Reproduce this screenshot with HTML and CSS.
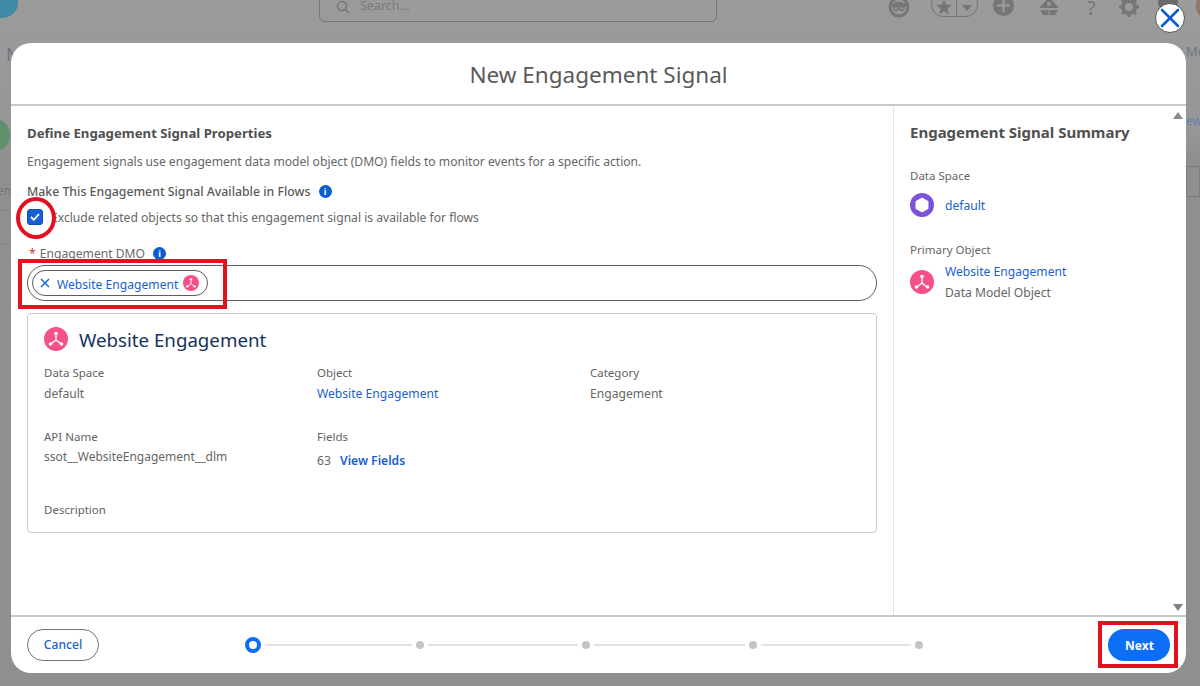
FILE: index.html
```html
<!DOCTYPE html>
<html>
<head>
<meta http-equiv="Content-Type" content="text/html; charset=utf-8">
<title>New Engagement Signal</title>
<link rel="stylesheet" href="styles.css">
</head>
<body>
    <!-- page behind the modal -->
    <div class="backdrop">
        <div class="cloud"></div>
        <div class="search">
            <svg width="14" height="14" viewBox="0 0 14 14"><circle cx="6" cy="6" r="4.5" fill="none" stroke="#767676" stroke-width="1.5"/><path d="M9.500 9.500L13 13" stroke="#767676" stroke-width="1.5"/></svg>
            <span>Search...</span>
        </div>
        <div class="top_icons">
            <svg class="ico_a" width="22" height="22" viewBox="0 0 22 22"><circle cx="11" cy="11" r="10.500" fill="#767676"/><circle cx="11" cy="11" r="7.500" fill="#999"/><path d="M4 8q7-5 14 0v3H4z" fill="#767676"/><circle cx="8" cy="12.500" r="2" fill="none" stroke="#767676" stroke-width="1.500"/><circle cx="14" cy="12.500" r="2" fill="none" stroke="#767676" stroke-width="1.500"/></svg>
            <div class="fav">
                <span class="fav_star">
                    <svg width="16" height="16" viewBox="0 0 16 16"><path d="M8 0.500l2.300 5 5.400 0.600-4 3.700 1.100 5.400L8 12.500l-4.800 2.700 1.100-5.400-4-3.700 5.400-0.600z" fill="#767676"/></svg>
                </span>
                <span class="fav_arrow"></span>
            </div>
            <svg class="ico_b" width="21" height="21" viewBox="0 0 21 21"><circle cx="10.500" cy="10.500" r="10.500" fill="#767676"/><path d="M10.500 4v13M4 10.500h13" stroke="#999" stroke-width="2.500"/></svg>
            <svg class="ico_c" width="20" height="20" viewBox="0 0 20 20"><path d="M10 0L20 11H0z" fill="#767676"/><path d="M1 13h18l-3 5H4z" fill="#767676"/><circle cx="10" cy="7" r="2" fill="#999"/><path d="M10 13v5" stroke="#999"/></svg>
            <span class="help">?</span>
            <svg class="ico_d" width="20" height="20" viewBox="0 0 20 20"><circle cx="10" cy="10" r="6" fill="none" stroke="#767676" stroke-width="4"/><path d="M10 0v4M10 16v4M0 10h4M16 10h4M3 3l3 3M14 14l3 3M17 3l-3 3M6 14l-3 3" stroke="#767676" stroke-width="3"/></svg>
            <div class="bg_dome"></div>
            <div class="bg_avatar"></div>
        </div>
        <span class="bg_m">M</span>
        <span class="bg_mo">Mo</span>
        <span class="bg_ew">ew</span>
        <div class="bg_green"></div>
        <span class="bg_em">em</span>
        <div class="bg_line bg_line1"></div>
        <div class="bg_line bg_line2"></div>
        <div class="bg_box"></div>
    </div>

    <a class="close" href="javascript:;">
        <svg width="20" height="20" viewBox="0 0 20 20"><path d="M2 2L18 18M18 2L2 18" stroke="#0b5cd5" stroke-width="2.600" stroke-linecap="round"/></svg>
    </a>

    <div class="modal">
        <h1 class="modal_head">New Engagement Signal</h1>
        <div class="modal_body">
            <div class="main">
                <h2 class="sec_title">Define Engagement Signal Properties</h2>
                <p class="intro">Engagement signals use engagement data model object (DMO) fields to monitor events for a specific action.</p>
                <div class="flow_label">Make This Engagement Signal Available in Flows <i class="info">i</i></div>
                <div class="check_row">
                    <span class="check">
                        <svg width="10" height="8" viewBox="0 0 10 8"><path d="M1 4l2.800 2.800L9 1.200" fill="none" stroke="#fff" stroke-width="1.800"/></svg>
                    </span>
                    <span class="check_text">Exclude related objects so that this engagement signal is available for flows</span>
                </div>
                <div class="dmo_label"><span class="req">*</span> Engagement DMO <i class="info">i</i></div>
                <div class="dmo_input">
                    <span class="pill">
                        <svg width="10" height="10" viewBox="0 0 10 10"><path d="M1 1l8 8M9 1l-8 8" stroke="#0b5cd5" stroke-width="1.300"/></svg>
                        <span class="pill_text">Website Engagement</span>
                        <svg class="dmo_ico" width="16" height="16" viewBox="0 0 24 24"><use href="#dmo"/></svg>
                    </span>
                </div>
                <div class="card">
                    <div class="card_title">
                        <svg width="24" height="24" viewBox="0 0 24 24"><use href="#dmo"/></svg>
                        <span>Website Engagement</span>
                    </div>
                    <div class="card_grid">
                        <div class="cell">
                            <div class="cell_label">Data Space</div>
                            <div>default</div>
                        </div>
                        <div class="cell">
                            <div class="cell_label">Object</div>
                            <a class="link" href="javascript:;">Website Engagement</a>
                        </div>
                        <div class="cell">
                            <div class="cell_label">Category</div>
                            <div>Engagement</div>
                        </div>
                        <div class="cell">
                            <div class="cell_label cell_label_api">API Name</div>
                            <div class="cell_api">ssot__WebsiteEngagement__dlm</div>
                        </div>
                        <div class="cell">
                            <div class="cell_label cell_label_fields">Fields</div>
                            <div>63 <a class="link view_fields" href="javascript:;">View Fields</a></div>
                        </div>
                        <div class="cell"></div>
                        <div class="cell">
                            <div class="cell_label">Description</div>
                        </div>
                    </div>
                </div>
            </div>
            <div class="side">
                <h2 class="side_title">Engagement Signal Summary</h2>
                <div class="side_label">Data Space</div>
                <div class="side_row side_row_space">
                    <svg width="24" height="24" viewBox="0 0 24 24"><circle cx="12" cy="12" r="12" fill="#7b52d9"/><path d="M12 5.500l5.700 3.200v6.600L12 18.500l-5.700-3.200V8.700z" fill="#fff" stroke="#fff" stroke-width="1.500" stroke-linejoin="round"/></svg>
                    <a class="link" href="javascript:;">default</a>
                </div>
                <div class="side_label side_label_primary">Primary Object</div>
                <div class="side_row side_row_object">
                    <svg width="24" height="24" viewBox="0 0 24 24"><use href="#dmo"/></svg>
                    <div>
                        <a class="link" href="javascript:;">Website Engagement</a>
                        <div class="side_sub">Data Model Object</div>
                    </div>
                </div>
                <span class="scroll_up"></span>
                <span class="scroll_down"></span>
            </div>
        </div>
        <div class="modal_foot">
            <a class="btn_cancel" href="javascript:;">Cancel</a>
            <div class="steps">
                <span class="step_now"></span>
                <span class="step_line step_line_first"></span>
                <span class="step_dot"></span>
                <span class="step_line"></span>
                <span class="step_dot"></span>
                <span class="step_line"></span>
                <span class="step_dot"></span>
                <span class="step_line"></span>
                <span class="step_dot"></span>
            </div>
            <a class="btn_next" href="javascript:;">Next</a>
        </div>
    </div>

    <!-- red marks drawn over the screenshot -->
    <div class="mark mark_circle"></div>
    <div class="mark mark_pill"></div>
    <div class="mark mark_next"></div>

    <svg class="defs" width="0" height="0">
        <symbol id="dmo" viewBox="0 0 24 24">
            <circle cx="12" cy="12" r="12" fill="#f6508a"/>
            <path d="M12 7v6M12 13l-5 4M12 13l5 4" stroke="#fff" stroke-width="1.300" fill="none"/>
            <circle cx="12" cy="6.500" r="1.800" fill="#fff"/>
            <circle cx="6.500" cy="17" r="1.800" fill="#fff"/>
            <circle cx="17.500" cy="17" r="1.800" fill="#fff"/>
        </symbol>
    </svg>
</body>
</html>
```

FILE: styles.css
```css
*{ margin: 0; padding: 0; box-sizing: border-box;}
html, body{ height: 100%; overflow: hidden;}
body{ position: relative; width: 1200px; height: 686px; background: #8f8f8f; font-family: "Noto Sans", "Open Sans", sans-serif; font-size: 12.12px; color: #666;}
a{ text-decoration: none;}
.link{ color: #1a5fd0;}

/* background page */
.backdrop{ position: absolute; left: 0; top: 0; width: 1200px; height: 686px; overflow: hidden; background: linear-gradient(#9b9b9b, #969696 130px, #8f8f8f 160px);}
.cloud{ position: absolute; left: -14px; top: -12px; width: 32px; height: 30px; border-radius: 50%; background: #3f8aa6;}
.search{ position: absolute; left: 319px; top: -12px; width: 398px; height: 34px; border: 1px solid #767676; border-radius: 6px; display: flex; align-items: flex-end; gap: 10px; padding: 0 0 7px 16px; color: #7a7a7a; font-size: 12.5px;}
.top_icons{ position: absolute; left: 0; top: 0;}
.top_icons > *{ position: absolute;}
.ico_a{ left: 888px; top: -4px;}
.fav{ left: 931px; top: -8px; width: 47px; height: 25px; border: 1px solid #767676; border-radius: 12px; display: flex;}
.fav_star{ width: 25px; border-right: 1px solid #767676; display: flex; align-items: center; justify-content: center; padding-top: 4px;}
.fav_arrow{ margin: 12px 0 0 5px; width: 0; height: 0; border: 5px solid transparent; border-top: 6px solid #767676;}
.ico_b{ left: 993px; top: -5px;}
.ico_c{ left: 1039px; top: -3px;}
.help{ left: 1087px; top: 0; font-size: 20px; line-height: 16px; color: #767676;}
.ico_d{ left: 1119px; top: -3px;}
.bg_dome{ left: 1158px; top: -8px; width: 20px; height: 20px; border-radius: 50%; background: #6a6a6a;}
.bg_avatar{ left: 1196px; top: -6px; width: 20px; height: 24px; border-radius: 50%; background: #8a7a70; border: 1px solid #9c6a5a;}
.bg_m{ position: absolute; left: 6px; top: 42px; font-size: 18px; color: #6d7480;}
.bg_mo{ position: absolute; left: 1186px; top: 42px; font-size: 13px; color: #6d7480;}
.bg_ew{ position: absolute; left: 1186px; top: 112px; font-size: 12px; color: #5f7fb3;}
.bg_green{ position: absolute; left: -14px; top: 120px; width: 24px; height: 30px; border-radius: 50%; background: #5f8f6b;}
.bg_em{ position: absolute; left: -3px; top: 182px; font-size: 12px; color: #777;}
.bg_line{ position: absolute; height: 1px; background: #858585;}
.bg_line1{ left: 0; width: 11px; top: 210px;}
.bg_line2{ left: 0; width: 11px; top: 243px;}
.bg_box{ position: absolute; left: 1186px; top: 166px; width: 14px; height: 31px; border: 1px solid #7c7c7c;}

/* modal */
.modal{ position: absolute; left: 11px; top: 43px; width: 1175px; height: 630px; background: #fff; border-radius: 20px; display: flex; flex-direction: column; overflow: hidden;}
.modal_head{ height: 63px; flex: none; border-bottom: 2px solid #c9c9c9; text-align: center; font-size: 22.5px; font-weight: 400; line-height: 64px; color: #5a5a5a;}
.modal_body{ flex: 1; display: flex; min-height: 0;}
.modal_foot{ height: 58px; flex: none; border-top: 2px solid #c9c9c9; display: flex; align-items: center; padding: 0 16px;}

.main{ width: 883px; flex: none; border-right: 1px solid #e5e5e5; padding: 19px 16px 0;}
.sec_title{ font-size: 13.2px; font-weight: 700; line-height: 17px; color: #505050;}
.intro{ margin-top: 11px; line-height: 17px;}
.flow_label{ margin-top: 13px; line-height: 17px; font-size: 12.3px; font-weight: 500; color: #5a5a5a;}
.info{ display: inline-block; width: 13px; height: 13px; margin-left: 5px; border-radius: 50%; background: #0b5cd5; color: #fff; font-size: 9px; font-weight: 700; font-style: normal; line-height: 13px; text-align: center; vertical-align: 1px;}
.check_row{ margin-top: 8px; display: flex; align-items: center; gap: 8px; height: 17px;}
.check{ width: 16px; height: 16px; border-radius: 3px; background: #1560d8; border: 1px solid #0f50b8; display: flex; align-items: center; justify-content: center;}
.check_text{ padding-top: 2px;}
.dmo_label{ margin-top: 20px; line-height: 17px; padding-left: 2px; color: #6a6a6a;}
.req{ color: #c23934; margin-right: 1px;}
.dmo_input{ margin-top: 3px; width: 850px; height: 36px; border: 1px solid #5c5c5c; border-radius: 18px; padding: 4px; display: flex; align-items: center;}
.pill{ height: 26px; padding: 0 8px 0 7px; border: 1px solid #5c5c5c; border-radius: 13px; display: inline-flex; align-items: center; gap: 7px;}
.pill_text{ color: #1a5fd0; padding-top: 3px; margin-right: -2px;}
.card{ margin-top: 12px; width: 850px; height: 220px; border: 1px solid #c9c9c9; border-radius: 4px; padding: 12px 16px 0;}
.card_title{ display: flex; align-items: center; gap: 11px; height: 26px; font-size: 18.7px; color: #16325c;}
.card_grid{ margin-top: 12px; display: grid; grid-template-columns: 273px 273px 1fr; grid-template-rows: 64px 73px 40px;}
.cell_label{ margin-bottom: 4px; line-height: 17px; font-size: 11.5px; color: #626262;}
.cell_label_api{ margin-bottom: 3px;}
.cell_label_fields{ margin-bottom: 7px;}
.cell{ line-height: 17px;}
.cell_api{ font-size: 12px;}
.view_fields{ margin-left: 6px; font-weight: 600;}

.side{ position: relative; flex: 1; padding: 16px 16px 0;}
.side_title{ font-size: 15px; font-weight: 700; line-height: 20px; color: #505050;}
.side_label{ margin-top: 25px; line-height: 17px; font-size: 11.5px;}
.side_label_primary{ margin-top: 24px;}
.side_row{ display: flex; align-items: center; gap: 11px; line-height: 21px;}
.side_row_space{ margin-top: 9px;}
.side_row_object{ margin-top: 3px;}
.side_sub{ color: #666;}
.scroll_up, .scroll_down{ position: absolute; right: 3px; width: 0; height: 0; border-left: 5px solid transparent; border-right: 5px solid transparent;}
.scroll_up{ top: 6px; border-bottom: 7px solid #8a8a8a;}
.scroll_down{ bottom: 4px; border-top: 7px solid #808080;}

.btn_cancel{ width: 72px; height: 32px; border: 1px solid #747474; border-radius: 16px; text-align: center; line-height: 30px; color: #1a5fd0; font-weight: 500;}
.steps{ margin-left: 146px; display: flex; align-items: center; gap: 4px;}
.step_now{ width: 16px; height: 16px; border: 4px solid #0b6ef5; border-radius: 50%; flex: none;}
.step_line{ width: 150.5px; height: 2px; background: #e2e2e2;}
.step_line_first{ width: 146.5px;}
.step_dot{ width: 8px; height: 8px; border-radius: 50%; background: #c4c4c4; flex: none;}
.btn_next{ margin-left: auto; width: 62px; height: 32px; border-radius: 16px; background: #0b6ef5; color: #fff; text-align: center; line-height: 33px; font-size: 12px; font-weight: 700; padding-left: 1px;}

/* overlays */
.close{ position: absolute; left: 1155px; top: 3px; width: 30px; height: 30px; border-radius: 50%; background: #fff; border: 1px solid #555; display: flex; align-items: center; justify-content: center;}
.mark{ position: absolute; border: 3px solid #e3101f;}
.mark_circle{ left: 16px; top: 197px; width: 40px; height: 42px; border-radius: 50%; border-width: 4px;}
.mark_pill{ left: 18px; top: 259px; width: 209px; height: 50px; border-width: 4px;}
.mark_next{ left: 1098px; top: 621px; width: 80px; height: 47px; border-width: 4px;}
.defs{ position: absolute;}
```
